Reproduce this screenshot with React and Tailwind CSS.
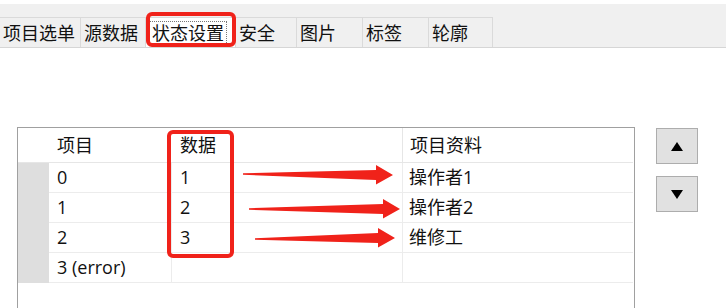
import React from 'react'

const tabs = [
  { label: '项目选单', w: 81 },
  { label: '源数据', w: 65 },
  { label: '状态设置', w: 90, active: true },
  { label: '安全', w: 61 },
  { label: '图片', w: 66 },
  { label: '标签', w: 66 },
  { label: '轮廓', w: 64 },
]

const rows = [
  { item: '0', data: '1', info: '操作者1' },
  { item: '1', data: '2', info: '操作者2' },
  { item: '2', data: '3', info: '维修工' },
  { item: '3 (error)', data: '', info: '' },
]

const Arrow = ({ x1, y1, x2, y2, base }) => (
  <polygon
    points={`${x1},${y1 - 0.8} ${base},${y2 - 5} ${base},${y2 - 10} ${x2},${y2} ${base},${y2 + 9.5} ${base},${y2 + 5} ${x1},${y1 + 0.8}`}
    fill="#f0221a"
  />
)

const App = () => {
  return (
    <div className="relative w-[726px] h-[308px] overflow-hidden bg-white text-[#111] font-['Open_Sans','Noto_Sans_CJK_SC',sans-serif]">
      {/* tab strip */}
      <div className="pt-[4px]">
        <div className="h-[44px] bg-[#f0f0f0] border-b border-[#d6d6d6] flex items-end">
          {tabs.map((t) => (
            <div
              key={t.label}
              style={{ width: t.w }}
              className={`h-[30px] border-t border-r border-[#dadada] flex items-center pl-[3px] text-[18px] leading-none ${t.active ? 'bg-white' : 'bg-[#f0f0f0]'}`}
            >
              {t.active ? (
                <span className="border border-dotted border-[#777] px-[2px] py-[2px]">{t.label}</span>
              ) : (
                t.label
              )}
            </div>
          ))}
        </div>
      </div>

      {/* body */}
      <div className="flex pl-[17px] pt-[79px]">
        <div className="w-[618px] h-[200px] border-l border-t border-r border-[#a0a0a0] pr-[2px]">
          <div className="grid grid-cols-[31px_123px_230px_231px] text-[18px]">
            <div className="h-[35px] border-b border-[#e6e6e6]" />
            <div className="h-[35px] border-b border-[#e6e6e6] flex items-center pl-[8px]">项目</div>
            <div className="h-[35px] border-b border-[#e6e6e6] flex items-center pl-[8px]">数据</div>
            <div className="h-[35px] border-b border-l border-[#e6e6e6] flex items-center pl-[7px]">项目资料</div>
            {rows.map((r) => (
              <React.Fragment key={r.item}>
                <div className="h-[30px] bg-[#dedede]" />
                <div className="h-[30px] border-b border-r border-[#ececec] flex items-center pl-[8px]">{r.item}</div>
                <div className="h-[30px] border-b border-[#ececec] flex items-center pl-[8px]">{r.data}</div>
                <div className="h-[30px] border-b border-l border-[#ececec] flex items-center pl-[6px]">{r.info}</div>
              </React.Fragment>
            ))}
          </div>
        </div>
        <div className="ml-[21px] pt-[1px] flex flex-col gap-[12px]">
          <button className="w-[42px] h-[36px] bg-[#e1e1e1] border border-[#adadad] flex items-center justify-center">
            <svg width="12" height="9" viewBox="0 0 12 9"><polygon points="6,0 12,9 0,9" fill="#000" /></svg>
          </button>
          <button className="w-[42px] h-[36px] bg-[#e1e1e1] border border-[#adadad] flex items-center justify-center">
            <svg width="12" height="9" viewBox="0 0 12 9"><polygon points="0,0 12,0 6,9" fill="#000" /></svg>
          </button>
        </div>
      </div>

      {/* annotations */}
      <div className="absolute left-[146px] top-[12px] w-[90px] h-[35px] border-[4px] border-[#f0221a] rounded-[6px]" />
      <div className="absolute left-[167px] top-[130px] w-[67px] h-[128px] border-[4px] border-[#f0221a] rounded-[6px]" />
      <svg className="absolute left-0 top-0 pointer-events-none" width="726" height="308">
        <Arrow x1={243} y1={174} x2={393} y2={175} base={376} />
        <Arrow x1={249} y1={209} x2={400} y2={209} base={383} />
        <Arrow x1={255} y1={239} x2={395} y2={238} base={378} />
      </svg>
    </div>
  )
}

export default App
